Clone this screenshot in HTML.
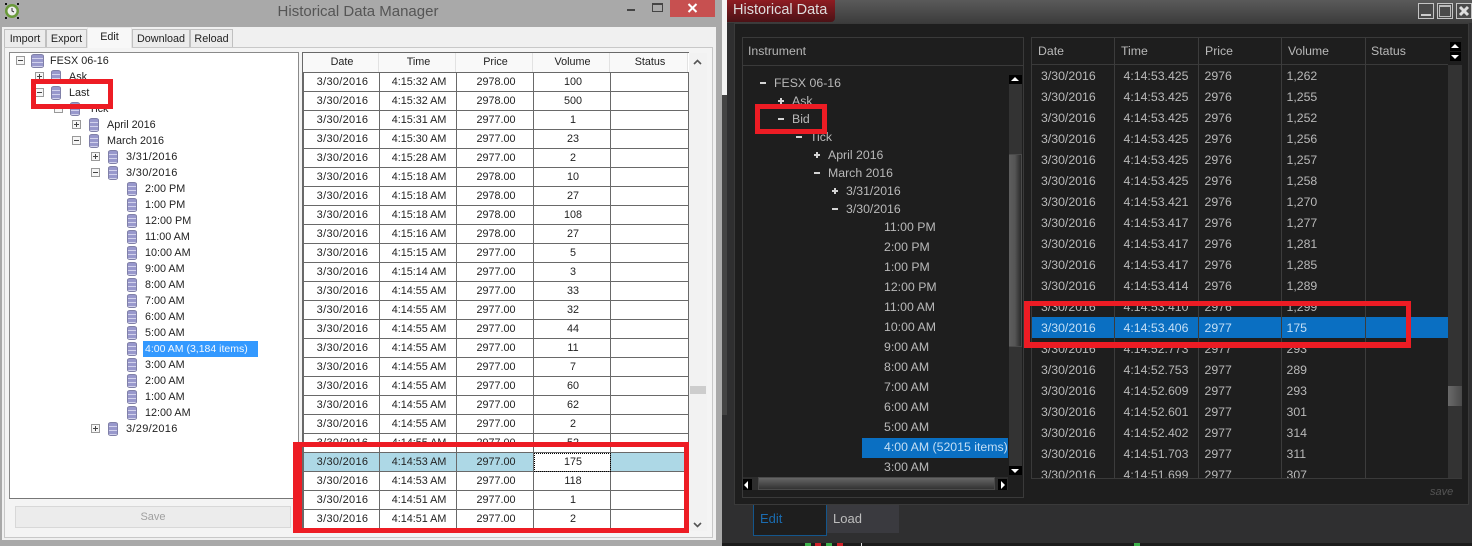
<!DOCTYPE html>
<html><head><meta charset="utf-8"><style>
*{box-sizing:border-box}
html,body{margin:0;padding:0}
body{width:1472px;height:546px;overflow:hidden;position:relative;background:#a9a9a9;font-family:"Liberation Sans",sans-serif}
.a{position:absolute}
.t{position:absolute;white-space:nowrap;line-height:16px;font-size:10.8px;color:#222;margin-top:1px}
.t.n{font-size:11px;letter-spacing:.3px}
.e{position:absolute;width:9px;height:9px;border:1px solid #999;background:#f6f6f6}
.e:before{content:"";position:absolute;left:1px;top:3px;width:5px;height:1px;background:#444}
.p:after{content:"";position:absolute;left:3px;top:1px;width:1px;height:5px;background:#444}
.d{position:absolute;width:10px;height:14px;margin-top:1px;border-radius:3px/2px;background:repeating-linear-gradient(180deg,#9898cc 0 3px,#d2d2ec 3px 4px),#99c;border:1px solid #8080a8}
.tab{position:absolute;top:29px;height:18px;background:#ececec;border:1px solid #c0c0c0;border-bottom:0;font-size:10.8px;color:#222;text-align:center;line-height:18px}
#lt{position:absolute;left:303px;top:72px;border-collapse:collapse;table-layout:fixed;width:385px;background:#fff}
#lt td{border:1px solid #696969;height:19px;padding:0 0 0 2px;text-align:center;font-size:10.8px;color:#222;line-height:17px;overflow:hidden}
#lt td:first-child{font-size:11px;letter-spacing:.3px}
.h{position:absolute;top:53px;height:19px;background:#f9f9f9;border-right:1px solid #e2e2e2;padding-left:3px;text-align:center;font-size:10.8px;color:#222;line-height:19px}
.r{position:absolute;border:5px solid #ed1c24;z-index:5}
.rt{position:absolute;white-space:nowrap;font-size:12.3px;color:#b9b9b9;line-height:20px}
.mn,.u{position:absolute;width:6px;height:2px;background:#d4d4d4}
.u:after{content:"";position:absolute;left:2px;top:-2px;width:2px;height:6px;background:#d4d4d4}
#rt{position:absolute;left:1032px;top:65px;border-collapse:collapse;table-layout:fixed;width:416px}
#rt td{height:21px;padding:0;font-size:12.3px;color:#b9b9b9;line-height:20px;white-space:nowrap;overflow:hidden}
#rt td+td{border-left:1px solid #3c3c3c}
.bt{position:absolute;background:#000;width:14px;height:10px}
.up,.dn,.lf,.rg{position:absolute;width:0;height:0}
.up{border:4px solid transparent;border-top:0;border-bottom:4px solid #fff}
.dn{border:4px solid transparent;border-bottom:0;border-top:4px solid #fff}
.lf{border:4px solid transparent;border-left:0;border-right:4px solid #fff}
.rg{border:4px solid transparent;border-right:0;border-left:4px solid #fff}
.wb{position:absolute;top:3px;width:16px;height:16px;border:1px solid #c4c4c4;background:#4a4a4a}
</style></head><body>

<!-- LEFT WINDOW -->
<div class="a" style="left:0;top:0;width:722px;height:546px;background:#a9a9a9"></div>
<svg class="a" style="left:4px;top:3px" width="16" height="16" viewBox="0 0 16 16"><circle cx="8" cy="8" r="7" fill="#6a9a3a"/><circle cx="8" cy="8" r="4.5" fill="#eee"/><path d="M8 5v3l2 1" stroke="#333" fill="none"/><path d="M1 1h2M13 1h2M1 15h2M13 15h2" stroke="#111" stroke-width="2"/></svg>
<div class="a" style="left:200px;width:316px;top:3px;text-align:center;font-size:15px;color:#555;line-height:18px">Historical Data Manager</div>
<div class="a" style="left:627px;top:9px;width:8px;height:2px;background:#444"></div>
<div class="a" style="left:652px;top:3px;width:11px;height:9px;border:1px solid #444;border-top-width:2px"></div>
<div class="a" style="left:670px;top:0;width:45px;height:17px;background:#c75050"></div>
<svg class="a" style="left:687px;top:3px" width="11" height="10" viewBox="0 0 11 10"><path d="M1.500 1l8 8M9.500 1l-8 8" stroke="#fff" stroke-width="2"/></svg>
<div class="a" style="left:2px;top:27px;width:714px;height:513px;background:#f0f0f0"></div>
<div class="a" style="left:4px;top:47px;width:709px;height:491px;background:#f4f4f4;border:1px solid #c8c8c8"></div>
<div class="tab" style="left:4px;width:42px">Import</div>
<div class="tab" style="left:46px;width:41px">Export</div>
<div class="tab" style="left:87px;width:45px;top:27px;height:21px;background:#f8f8f8;border-color:#e6e6e6;line-height:19px;z-index:2">Edit</div>
<div class="tab" style="left:132px;width:58px">Download</div>
<div class="tab" style="left:190px;width:43px">Reload</div>

<div class="a" style="left:9px;top:52px;width:290px;height:447px;background:#fff;border:1px solid #8a8a8a;border-bottom-color:#777"></div>
<i class="e" style="left:16px;top:56px"></i><i class="d" style="left:31px;top:53px;width:13px"></i><div class="t" style="left:50px;top:52px">FESX 06-16</div>
<i class="e p" style="left:35px;top:72px"></i><i class="d" style="left:51px;top:69px"></i><div class="t" style="left:69px;top:68px">Ask</div>
<i class="e" style="left:35px;top:88px"></i><i class="d" style="left:51px;top:85px"></i><div class="t" style="left:69px;top:84px">Last</div>
<i class="e" style="left:54px;top:104px"></i><i class="d" style="left:70px;top:101px"></i><div class="t" style="left:89px;top:100px">Tick</div>
<i class="e p" style="left:72px;top:120px"></i><i class="d" style="left:89px;top:117px"></i><div class="t" style="left:107px;top:116px">April 2016</div>
<i class="e" style="left:72px;top:136px"></i><i class="d" style="left:89px;top:133px"></i><div class="t" style="left:107px;top:132px">March 2016</div>
<i class="e p" style="left:91px;top:152px"></i><i class="d" style="left:108px;top:149px"></i><div class="t n" style="left:126px;top:148px">3/31/2016</div>
<i class="e" style="left:91px;top:168px"></i><i class="d" style="left:108px;top:165px"></i><div class="t n" style="left:126px;top:164px">3/30/2016</div>
<i class="d" style="left:127px;top:181px"></i><div class="t" style="left:145px;top:180px">2:00 PM</div>
<i class="d" style="left:127px;top:197px"></i><div class="t" style="left:145px;top:196px">1:00 PM</div>
<i class="d" style="left:127px;top:213px"></i><div class="t" style="left:145px;top:212px">12:00 PM</div>
<i class="d" style="left:127px;top:229px"></i><div class="t" style="left:145px;top:228px">11:00 AM</div>
<i class="d" style="left:127px;top:245px"></i><div class="t" style="left:145px;top:244px">10:00 AM</div>
<i class="d" style="left:127px;top:261px"></i><div class="t" style="left:145px;top:260px">9:00 AM</div>
<i class="d" style="left:127px;top:277px"></i><div class="t" style="left:145px;top:276px">8:00 AM</div>
<i class="d" style="left:127px;top:293px"></i><div class="t" style="left:145px;top:292px">7:00 AM</div>
<i class="d" style="left:127px;top:309px"></i><div class="t" style="left:145px;top:308px">6:00 AM</div>
<i class="d" style="left:127px;top:325px"></i><div class="t" style="left:145px;top:324px">5:00 AM</div>
<i class="d" style="left:127px;top:341px"></i><div class="a" style="left:143px;top:341px;width:115px;height:16px;background:#3399ff"></div><div class="t" style="left:145px;top:340px;color:#f2f8ff;font-size:10.500px">4:00 AM (3,184 items)</div>
<i class="d" style="left:127px;top:357px"></i><div class="t" style="left:145px;top:356px">3:00 AM</div>
<i class="d" style="left:127px;top:373px"></i><div class="t" style="left:145px;top:372px">2:00 AM</div>
<i class="d" style="left:127px;top:389px"></i><div class="t" style="left:145px;top:388px">1:00 AM</div>
<i class="d" style="left:127px;top:405px"></i><div class="t" style="left:145px;top:404px">12:00 AM</div>
<i class="e p" style="left:91px;top:424px"></i><i class="d" style="left:108px;top:421px"></i><div class="t n" style="left:126px;top:420px">3/29/2016</div>

<div class="a" style="left:15px;top:506px;width:276px;height:22px;background:#ececec;border:1px solid #d8d8d8;text-align:center;font-size:11px;color:#a0a0a0;line-height:21px">Save</div>

<div class="a" style="left:302px;top:52px;width:387px;height:478px;background:#fff;border-left:1px solid #696969;border-top:1px solid #696969"></div>
<div class="h" style="left:303px;width:76px">Date</div>
<div class="h" style="left:379px;width:77px">Time</div>
<div class="h" style="left:456px;width:77px">Price</div>
<div class="h" style="left:533px;width:77px">Volume</div>
<div class="h" style="left:610px;width:78px">Status</div>

<table id="lt"><colgroup><col style="width:76px"><col style="width:77px"><col style="width:77px"><col style="width:77px"><col style="width:78px"></colgroup>
<tr><td>3/30/2016<td>4:15:32 AM<td>2978.00<td>100<td>
<tr><td>3/30/2016<td>4:15:32 AM<td>2978.00<td>500<td>
<tr><td>3/30/2016<td>4:15:31 AM<td>2977.00<td>1<td>
<tr><td>3/30/2016<td>4:15:30 AM<td>2977.00<td>23<td>
<tr><td>3/30/2016<td>4:15:28 AM<td>2977.00<td>2<td>
<tr><td>3/30/2016<td>4:15:18 AM<td>2978.00<td>10<td>
<tr><td>3/30/2016<td>4:15:18 AM<td>2978.00<td>27<td>
<tr><td>3/30/2016<td>4:15:18 AM<td>2978.00<td>108<td>
<tr><td>3/30/2016<td>4:15:16 AM<td>2978.00<td>27<td>
<tr><td>3/30/2016<td>4:15:15 AM<td>2977.00<td>5<td>
<tr><td>3/30/2016<td>4:15:14 AM<td>2977.00<td>3<td>
<tr><td>3/30/2016<td>4:14:55 AM<td>2977.00<td>33<td>
<tr><td>3/30/2016<td>4:14:55 AM<td>2977.00<td>32<td>
<tr><td>3/30/2016<td>4:14:55 AM<td>2977.00<td>44<td>
<tr><td>3/30/2016<td>4:14:55 AM<td>2977.00<td>11<td>
<tr><td>3/30/2016<td>4:14:55 AM<td>2977.00<td>7<td>
<tr><td>3/30/2016<td>4:14:55 AM<td>2977.00<td>60<td>
<tr><td>3/30/2016<td>4:14:55 AM<td>2977.00<td>62<td>
<tr><td>3/30/2016<td>4:14:55 AM<td>2977.00<td>2<td>
<tr><td>3/30/2016<td>4:14:55 AM<td>2977.00<td>52<td>
<tr style="background:#add8e6"><td>3/30/2016<td>4:14:53 AM<td>2977.00<td style="background:#fff;outline:1px dotted #000;outline-offset:-1px">175<td>
<tr><td>3/30/2016<td>4:14:53 AM<td>2977.00<td>118<td>
<tr><td>3/30/2016<td>4:14:51 AM<td>2977.00<td>1<td>
<tr><td>3/30/2016<td>4:14:51 AM<td>2977.00<td>2<td>
</table>

<div class="a" style="left:689px;top:53px;width:18px;height:478px;background:#f2f2f2"></div>
<svg class="a" style="left:693px;top:59px" width="9" height="6"><path d="M1 5l3.500-3.500L8 5" stroke="#555" stroke-width="1.600" fill="none"/></svg>
<div class="a" style="left:690px;top:386px;width:16px;height:8px;background:#cdcdcd"></div>
<svg class="a" style="left:693px;top:522px" width="9" height="6"><path d="M1 1l3.500 3.500L8 1" stroke="#555" stroke-width="1.600" fill="none"/></svg>

<div class="r" style="left:31px;top:79px;width:82px;height:30px"></div>
<div class="r" style="left:293px;top:442px;width:396px;height:91px;border-left-width:9px"></div>

<!-- RIGHT WINDOW -->
<div class="a" style="left:722px;top:0;width:750px;height:546px;background:#2f2f30"></div>
<div class="a" style="left:722px;top:0;width:5px;height:95px;background:#f4f4f4"></div>
<div class="a" style="left:722px;top:95px;width:5px;height:320px;background:#444"></div>
<div class="a" style="left:727px;top:0;width:745px;height:23px;background:linear-gradient(#5a5a5a,#3c3c3c)"></div>
<div class="a" style="left:727px;top:0;width:108px;height:22px;background:linear-gradient(#8f1c22,#4b1216);border-radius:0 0 4px 0;color:#ddd;font-size:14.500px;line-height:21px;padding-left:6px;white-space:nowrap">Historical Data</div>
<div class="wb" style="left:1418px"><div class="a" style="left:2px;top:10px;width:10px;height:2px;background:#ccc"></div></div>
<div class="wb" style="left:1437px"><div class="a" style="left:1px;top:1px;width:12px;height:12px;border:1px solid #bbb;border-top-width:2px"></div></div>
<div class="wb" style="left:1456px"><svg class="a" style="left:1px;top:1px" width="12" height="12"><path d="M2 2l8 8M10 2l-8 8" stroke="#ddd" stroke-width="3"/></svg></div>

<div class="a" style="left:734px;top:23px;width:735px;height:482px;background:#1e1e1e;border:1px solid #3a3a3a"></div>

<!-- instrument panel -->
<div class="a" style="left:742px;top:37px;width:282px;height:461px;border:1px solid #3a3a3a"></div>
<div class="a" style="left:742px;top:65px;width:282px;height:1px;background:#3a3a3a"></div>
<div class="rt" style="left:748px;top:41px;color:#b5b5b5">Instrument</div>

<i class="mn" style="left:760px;top:82px"></i><div class="rt" style="left:774px;top:73px">FESX 06-16</div>
<i class="u" style="left:778px;top:100px"></i><div class="rt" style="left:792px;top:91px">Ask</div>
<i class="mn" style="left:778px;top:118px"></i><div class="rt" style="left:792px;top:109px">Bid</div>
<i class="mn" style="left:796px;top:136px"></i><div class="rt" style="left:810px;top:127px">Tick</div>
<i class="u" style="left:814px;top:154px"></i><div class="rt" style="left:828px;top:145px">April 2016</div>
<i class="mn" style="left:814px;top:172px"></i><div class="rt" style="left:828px;top:163px">March 2016</div>
<i class="u" style="left:832px;top:190px"></i><div class="rt" style="left:846px;top:181px">3/31/2016</div>
<i class="mn" style="left:832px;top:208px"></i><div class="rt" style="left:846px;top:199px">3/30/2016</div>
<div class="rt" style="left:884px;top:217px">11:00 PM</div>
<div class="rt" style="left:884px;top:237px">2:00 PM</div>
<div class="rt" style="left:884px;top:257px">1:00 PM</div>
<div class="rt" style="left:884px;top:277px">12:00 PM</div>
<div class="rt" style="left:884px;top:297px">11:00 AM</div>
<div class="rt" style="left:884px;top:317px">10:00 AM</div>
<div class="rt" style="left:884px;top:337px">9:00 AM</div>
<div class="rt" style="left:884px;top:357px">8:00 AM</div>
<div class="rt" style="left:884px;top:377px">7:00 AM</div>
<div class="rt" style="left:884px;top:397px">6:00 AM</div>
<div class="rt" style="left:884px;top:417px">5:00 AM</div>
<div class="a" style="left:862px;top:438px;width:146px;height:20px;background:#0a6fc2"></div>
<div class="rt" style="left:884px;top:437px;color:#c4dff5">4:00 AM (52015 items)</div>
<div class="rt" style="left:884px;top:457px">3:00 AM</div>

<div class="a" style="left:1009px;top:75px;width:13px;height:400px;background:#333"></div>
<div class="a" style="left:1009px;top:154px;width:13px;height:193px;background:linear-gradient(90deg,#5e5e5e,#555 50%,#2a2a2a);border:1px solid #4a4a4a;border-left:0"></div>
<div class="bt" style="left:1009px;top:75px;width:13px;height:9px"><i class="up" style="left:2px;top:2px"></i></div>
<div class="bt" style="left:1009px;top:466px;width:13px;height:9px"><i class="dn" style="left:2px;top:3px"></i></div>
<div class="a" style="left:743px;top:477px;width:265px;height:13px;background:#2d2d2d"></div>
<div class="a" style="left:758px;top:477px;width:237px;height:13px;background:linear-gradient(#666,#333);border:1px solid #4a4a4a"></div>
<div class="bt" style="left:743px;top:479px;width:9px;height:11px"><i class="lf" style="left:1px;top:2px"></i></div>
<div class="bt" style="left:998px;top:479px;width:9px;height:11px"><i class="rg" style="left:3px;top:2px"></i></div>

<!-- data panel -->
<div class="a" style="left:1031px;top:37px;width:431px;height:442px;border:1px solid #3a3a3a;overflow:hidden"></div>
<div class="a" style="left:1032px;top:38px;width:416px;height:27px;border-bottom:1px solid #3a3a3a">
<div class="a" style="left:82px;top:0;width:1px;height:27px;background:#3c3c3c"></div>
<div class="a" style="left:166px;top:0;width:1px;height:27px;background:#3c3c3c"></div>
<div class="a" style="left:249px;top:0;width:1px;height:27px;background:#3c3c3c"></div>
<div class="a" style="left:333px;top:0;width:1px;height:27px;background:#3c3c3c"></div>
</div>
<div class="rt" style="left:1038px;top:41px">Date</div>
<div class="rt" style="left:1121px;top:41px">Time</div>
<div class="rt" style="left:1205px;top:41px">Price</div>
<div class="rt" style="left:1288px;top:41px">Volume</div>
<div class="rt" style="left:1371px;top:41px">Status</div>

<div class="a" style="left:1032px;top:65px;width:416px;height:413px;overflow:hidden">
<table id="rt" style="left:0;top:0"><colgroup><col style="width:82px"><col style="width:84px"><col style="width:83px"><col style="width:84px"><col style="width:83px"></colgroup>
<tr><td style="padding-left:9px">3/30/2016<td style="padding-left:9px">4:14:53.425<td style="padding-left:6px">2976<td style="padding-left:5px">1,262<td>
<tr><td style="padding-left:9px">3/30/2016<td style="padding-left:9px">4:14:53.425<td style="padding-left:6px">2976<td style="padding-left:5px">1,255<td>
<tr><td style="padding-left:9px">3/30/2016<td style="padding-left:9px">4:14:53.425<td style="padding-left:6px">2976<td style="padding-left:5px">1,252<td>
<tr><td style="padding-left:9px">3/30/2016<td style="padding-left:9px">4:14:53.425<td style="padding-left:6px">2976<td style="padding-left:5px">1,256<td>
<tr><td style="padding-left:9px">3/30/2016<td style="padding-left:9px">4:14:53.425<td style="padding-left:6px">2976<td style="padding-left:5px">1,257<td>
<tr><td style="padding-left:9px">3/30/2016<td style="padding-left:9px">4:14:53.425<td style="padding-left:6px">2976<td style="padding-left:5px">1,258<td>
<tr><td style="padding-left:9px">3/30/2016<td style="padding-left:9px">4:14:53.421<td style="padding-left:6px">2976<td style="padding-left:5px">1,270<td>
<tr><td style="padding-left:9px">3/30/2016<td style="padding-left:9px">4:14:53.417<td style="padding-left:6px">2976<td style="padding-left:5px">1,277<td>
<tr><td style="padding-left:9px">3/30/2016<td style="padding-left:9px">4:14:53.417<td style="padding-left:6px">2976<td style="padding-left:5px">1,281<td>
<tr><td style="padding-left:9px">3/30/2016<td style="padding-left:9px">4:14:53.417<td style="padding-left:6px">2976<td style="padding-left:5px">1,285<td>
<tr><td style="padding-left:9px">3/30/2016<td style="padding-left:9px">4:14:53.414<td style="padding-left:6px">2976<td style="padding-left:5px">1,289<td>
<tr><td style="padding-left:9px">3/30/2016<td style="padding-left:9px">4:14:53.410<td style="padding-left:6px">2976<td style="padding-left:5px">1,299<td>
<tr style="background:#0a6fc2"><td style="padding-left:9px;color:#c4dff5">3/30/2016<td style="padding-left:9px;color:#c4dff5">4:14:53.406<td style="padding-left:6px;color:#c4dff5">2977<td style="padding-left:5px;color:#c4dff5">175<td>
<tr><td style="padding-left:9px">3/30/2016<td style="padding-left:9px">4:14:52.773<td style="padding-left:6px">2977<td style="padding-left:5px">293<td>
<tr><td style="padding-left:9px">3/30/2016<td style="padding-left:9px">4:14:52.753<td style="padding-left:6px">2977<td style="padding-left:5px">289<td>
<tr><td style="padding-left:9px">3/30/2016<td style="padding-left:9px">4:14:52.609<td style="padding-left:6px">2977<td style="padding-left:5px">293<td>
<tr><td style="padding-left:9px">3/30/2016<td style="padding-left:9px">4:14:52.601<td style="padding-left:6px">2977<td style="padding-left:5px">301<td>
<tr><td style="padding-left:9px">3/30/2016<td style="padding-left:9px">4:14:52.402<td style="padding-left:6px">2977<td style="padding-left:5px">314<td>
<tr><td style="padding-left:9px">3/30/2016<td style="padding-left:9px">4:14:51.703<td style="padding-left:6px">2977<td style="padding-left:5px">311<td>
<tr><td style="padding-left:9px">3/30/2016<td style="padding-left:9px">4:14:51.699<td style="padding-left:6px">2977<td style="padding-left:5px">307<td>
</table></div>

<div class="a" style="left:1448px;top:38px;width:14px;height:440px;background:#333"></div>
<div class="bt" style="left:1448px;top:38px;height:27px;background:#1e1e1e"></div>
<div class="bt" style="left:1450px;top:42px;width:11px;height:9px"><i class="up" style="left:1px;top:2px"></i></div>
<div class="bt" style="left:1450px;top:52px;width:11px;height:9px"><i class="dn" style="left:1px;top:3px"></i></div>
<div class="a" style="left:1448px;top:386px;width:14px;height:20px;background:linear-gradient(90deg,#6a6a6a,#4a4a4a)"></div>
<div class="a" style="left:1430px;top:485px;font-size:11px;font-style:italic;color:#555;line-height:14px">save</div>

<div class="r" style="left:755px;top:104px;width:72px;height:30px"></div>
<div class="r" style="left:1024px;top:301px;width:387px;height:47px;border-width:5px 5px 6px 6px"></div>

<!-- bottom tabs -->
<div class="a" style="left:753px;top:505px;width:74px;height:31px;background:#1e1e1e;border:1px solid #14568c;border-top:0;color:#1b6cb0;font-size:13px;line-height:28px;padding-left:6px">Edit</div>
<div class="a" style="left:827px;top:505px;width:72px;height:28px;background:#3a3a3f;color:#bdbdbd;font-size:13px;line-height:28px;padding-left:6px">Load</div>

<div class="a" style="left:722px;top:543px;width:750px;height:3px;background:#1c1c1c"></div>
<div class="a" style="left:805px;top:543px;width:6px;height:3px;background:#3cb04a"></div>
<div class="a" style="left:815px;top:543px;width:6px;height:3px;background:#d02028"></div>
<div class="a" style="left:826px;top:543px;width:6px;height:3px;background:#3cb04a"></div>
<div class="a" style="left:837px;top:543px;width:6px;height:3px;background:#d02028"></div>
<div class="a" style="left:861px;top:543px;width:1px;height:3px;background:#ddd"></div>
<div class="a" style="left:1134px;top:543px;width:6px;height:3px;background:#3cb04a"></div>
</body></html>
